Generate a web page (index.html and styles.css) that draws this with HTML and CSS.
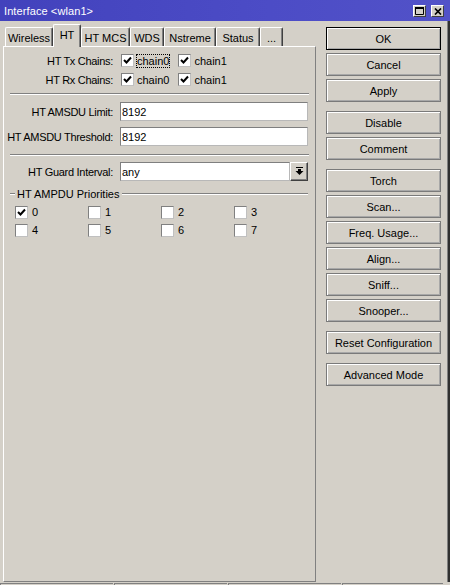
FILE: index.html
```html
<!DOCTYPE html>
<html>
<head>
<meta charset="utf-8">
<link rel="stylesheet" href="styles.css">
</head>
<body>
<div class="window">
  <div class="titlebar">
    <span class="title">Interface &lt;wlan1&gt;</span>
    <div class="tb-buttons">
      <span class="tb-btn"><svg width="9" height="8" viewBox="0 0 9 8"><path d="M0.5 0.5h8v7h-8z" fill="none" stroke="#000"/><rect x="0" y="0" width="9" height="2" fill="#000"/></svg></span>
      <span class="tb-btn"><svg width="8" height="7" viewBox="0 0 8 7"><path d="M1 0.5L7 6.5M7 0.5L1 6.5" stroke="#000" stroke-width="1.7"/></svg></span>
    </div>
  </div>
  <div class="main">
    <div class="left">
      <div class="tabs">
        <span class="tab tab-wireless">Wireless</span>
        <span class="tab tab-ht sel">HT</span>
        <span class="tab tab-htmcs">HT MCS</span>
        <span class="tab tab-wds">WDS</span>
        <span class="tab tab-nstreme">Nstreme</span>
        <span class="tab tab-status">Status</span>
        <span class="tab tab-more">...</span>
      </div>
      <div class="panel">
        <div class="row first">
          <span class="label">HT Tx Chains:</span>
          <div class="ctrl chains">
            <span class="chk"><span class="box"><svg width="11" height="11" viewBox="0 0 11 11"><path d="M2 5L4.5 7.5L9 2.5" fill="none" stroke="#000" stroke-width="2"/></svg></span><span class="txt focus">chain0</span></span>
            <span class="chk"><span class="box"><svg width="11" height="11" viewBox="0 0 11 11"><path d="M2 5L4.5 7.5L9 2.5" fill="none" stroke="#000" stroke-width="2"/></svg></span><span class="txt">chain1</span></span>
          </div>
        </div>
        <div class="row">
          <span class="label">HT Rx Chains:</span>
          <div class="ctrl chains">
            <span class="chk"><span class="box"><svg width="11" height="11" viewBox="0 0 11 11"><path d="M2 5L4.5 7.5L9 2.5" fill="none" stroke="#000" stroke-width="2"/></svg></span><span class="txt">chain0</span></span>
            <span class="chk"><span class="box"><svg width="11" height="11" viewBox="0 0 11 11"><path d="M2 5L4.5 7.5L9 2.5" fill="none" stroke="#000" stroke-width="2"/></svg></span><span class="txt">chain1</span></span>
          </div>
        </div>
        <div class="sep sep-a"></div>
        <div class="row row-input1">
          <span class="label">HT AMSDU Limit:</span>
          <div class="ctrl"><div class="input">8192</div></div>
        </div>
        <div class="row row-input2">
          <span class="label">HT AMSDU Threshold:</span>
          <div class="ctrl"><div class="input">8192</div></div>
        </div>
        <div class="sep sep-b"></div>
        <div class="row row-input1">
          <span class="label">HT Guard Interval:</span>
          <div class="ctrl combo">
            <div class="input combo-input">any</div>
            <span class="drop"><svg width="9" height="9" viewBox="0 0 9 9"><rect x="1" y="0" width="7" height="1" fill="#000"/><rect x="3" y="2" width="3" height="2" fill="#000"/><path d="M0.5 4h8l-4 4z" fill="#000"/></svg></span>
          </div>
        </div>
        <div class="group-head"><span class="group-title">HT AMPDU Priorities</span></div>
        <div class="prio">
          <span class="chk"><span class="box"><svg width="11" height="11" viewBox="0 0 11 11"><path d="M2 5L4.5 7.5L9 2.5" fill="none" stroke="#000" stroke-width="2"/></svg></span><span class="num">0</span></span>
          <span class="chk"><span class="box"></span><span class="num">1</span></span>
          <span class="chk"><span class="box"></span><span class="num">2</span></span>
          <span class="chk"><span class="box"></span><span class="num">3</span></span>
          <span class="chk"><span class="box"></span><span class="num">4</span></span>
          <span class="chk"><span class="box"></span><span class="num">5</span></span>
          <span class="chk"><span class="box"></span><span class="num">6</span></span>
          <span class="chk"><span class="box"></span><span class="num">7</span></span>
        </div>
      </div>
    </div>
    <div class="buttons">
      <div class="btn default">OK</div>
      <div class="btn">Cancel</div>
      <div class="btn">Apply</div>
      <div class="btn gap">Disable</div>
      <div class="btn">Comment</div>
      <div class="btn gap">Torch</div>
      <div class="btn">Scan...</div>
      <div class="btn">Freq. Usage...</div>
      <div class="btn">Align...</div>
      <div class="btn">Sniff...</div>
      <div class="btn">Snooper...</div>
      <div class="btn gap">Reset Configuration</div>
      <div class="btn gap">Advanced Mode</div>
    </div>
  </div>
  <div class="statusbar">
    <span class="seg"></span>
    <span class="seg"></span>
    <span class="seg"></span>
    <span class="seg seg-last"></span>
  </div>
</div>
</body>
</html>
```

FILE: styles.css
```css
html, body {
  margin: 0;
  padding: 0;
}

body {
  width: 450px;
  height: 585px;
  overflow: hidden;
  background: #d4d0c8;
  font-family: "Liberation Sans", Arial, sans-serif;
  font-size: 11px;
  color: #000;
}

.window {
  width: 450px;
  height: 585px;
  display: flex;
  flex-direction: column;
}

/* title bar */
.titlebar {
  height: 21px;
  box-sizing: border-box;
  padding: 1px 6px 0 4px;
  display: flex;
  align-items: center;
  justify-content: space-between;
  background: linear-gradient(90deg, #4242bc, #4c4cc6 60%, #5252c8);
  color: #fff;
  flex: none;
}

.title {
  letter-spacing: 0.1px;
}

.tb-buttons {
  display: flex;
  gap: 5px;
}

.tb-btn {
  width: 13px;
  height: 12px;
  box-sizing: border-box;
  background: #d4d0c8;
  border: 1px solid;
  border-color: #fff #404040 #404040 #fff;
  display: flex;
  align-items: center;
  justify-content: center;
}

/* main */
.main {
  display: flex;
  height: 561px;
  flex: none;
  box-shadow: inset -2px 0 #303030, inset -3px 0 #808080;
}

.left {
  width: 313px;
  margin-left: 3px;
  display: flex;
  flex-direction: column;
}

.tabs {
  height: 25px;
  display: flex;
  align-items: flex-end;
  padding-left: 2px;
  position: relative;
  z-index: 2;
  flex: none;
}

.tab {
  height: 19px;
  box-sizing: border-box;
  border-top: 1px solid #fff;
  border-left: 1px solid #fff;
  border-right: 1px solid #404040;
  box-shadow: inset -1px 0 #808080;
  border-radius: 2px 2px 0 0;
  display: flex;
  align-items: center;
  justify-content: center;
  background: #d4d0c8;
  padding-top: 1px;
}

.tab.sel {
  height: 23px;
  margin-bottom: -1px;
  padding-bottom: 3px;
}

.tab-wireless { width: 48px; }
.tab-ht { width: 28px; }
.tab-htmcs { width: 49px; }
.tab-wds { width: 34px; }
.tab-nstreme { width: 52px; }
.tab-status { width: 44px; }
.tab-more { width: 23px; }

.panel {
  height: 536px;
  box-sizing: border-box;
  border: 1px solid;
  border-color: #fff #808080 #808080 #fff;
  padding-top: 4px;
  position: relative;
  z-index: 1;
}

.row {
  display: flex;
  align-items: center;
  height: 19px;
}

.label {
  width: 109px;
  text-align: right;
  white-space: nowrap;
  letter-spacing: -0.3px;
  flex: none;
}

.ctrl {
  margin-left: 7px;
}

.chains {
  display: flex;
  align-items: center;
}

.chk {
  display: flex;
  align-items: center;
}

.box {
  width: 13px;
  height: 13px;
  box-sizing: border-box;
  background: #fff;
  border: 1px solid;
  border-color: #808080 #c0c0c0 #c0c0c0 #808080;
  display: flex;
  align-items: center;
  justify-content: center;
  flex: none;
}

.chains .box {
  margin-left: 1px;
}

.chains .chk + .chk {
  margin-left: 7px;
}

.txt {
  margin-left: 2px;
  border: 1px dotted transparent;
  line-height: 12px;
}

.txt.focus {
  border-color: #000;
}

.sep {
  border-top: 1px solid #808080;
  border-bottom: 1px solid #fff;
  margin: 0 6px;
}

.sep-a { margin-top: 4px; }
.sep-b { margin-top: 8px; }

.row-input1 { margin-top: 6px; }
.sep-a + .row-input1 { margin-top: 7px; }
.row-input2 { margin-top: 6px; }

.input {
  width: 188px;
  height: 19px;
  box-sizing: border-box;
  background: #fff;
  border: 1px solid;
  border-color: #7f7f7f #b8b8b8 #b8b8b8 #7f7f7f;
  padding-left: 1px;
  display: flex;
  align-items: center;
}

.combo {
  display: flex;
}

.combo-input {
  width: 170px;
}

.drop {
  width: 18px;
  height: 19px;
  box-sizing: border-box;
  border: 1px solid;
  border-color: #fff #404040 #404040 #fff;
  box-shadow: inset -1px -1px #808080;
  display: flex;
  align-items: center;
  justify-content: center;
}

.group-head {
  margin: 6px 7px 0 6px;
  height: 13px;
  display: flex;
  align-items: center;
}

.group-head::before,
.group-head::after {
  content: "";
  border-top: 1px solid #808080;
  border-bottom: 1px solid #fff;
}

.group-head::before {
  width: 5px;
}

.group-head::after {
  flex: 1;
}

.group-title {
  padding: 0 3px 0 2px;
}

.prio {
  display: grid;
  grid-template-columns: repeat(4, 73px);
  grid-auto-rows: 18px;
  padding-left: 11px;
  margin-top: 3px;
}

.num {
  margin-left: 4px;
}

/* right buttons */
.buttons {
  width: 115px;
  margin-left: 10px;
  padding-top: 6px;
  display: flex;
  flex-direction: column;
}

.btn {
  height: 23px;
  box-sizing: border-box;
  border: 1px solid #7a7a7a;
  box-shadow: inset 1px 1px #fff, inset -1px -1px #a8a8a8;
  display: flex;
  align-items: center;
  justify-content: center;
  margin-top: 3px;
}

.btn:first-child {
  margin-top: 0;
}

.btn.default {
  border-color: #000;
}

.btn.gap {
  margin-top: 9px;
}

/* status bar */
.statusbar {
  margin-top: 1px;
  display: flex;
  gap: 1px;
  padding-left: 0;
}

.seg {
  width: 113px;
  height: 18px;
  box-sizing: border-box;
  border-top: 1px solid #808080;
  border-left: 1px solid #808080;
}

.seg-last {
  width: 101px;
}
```
